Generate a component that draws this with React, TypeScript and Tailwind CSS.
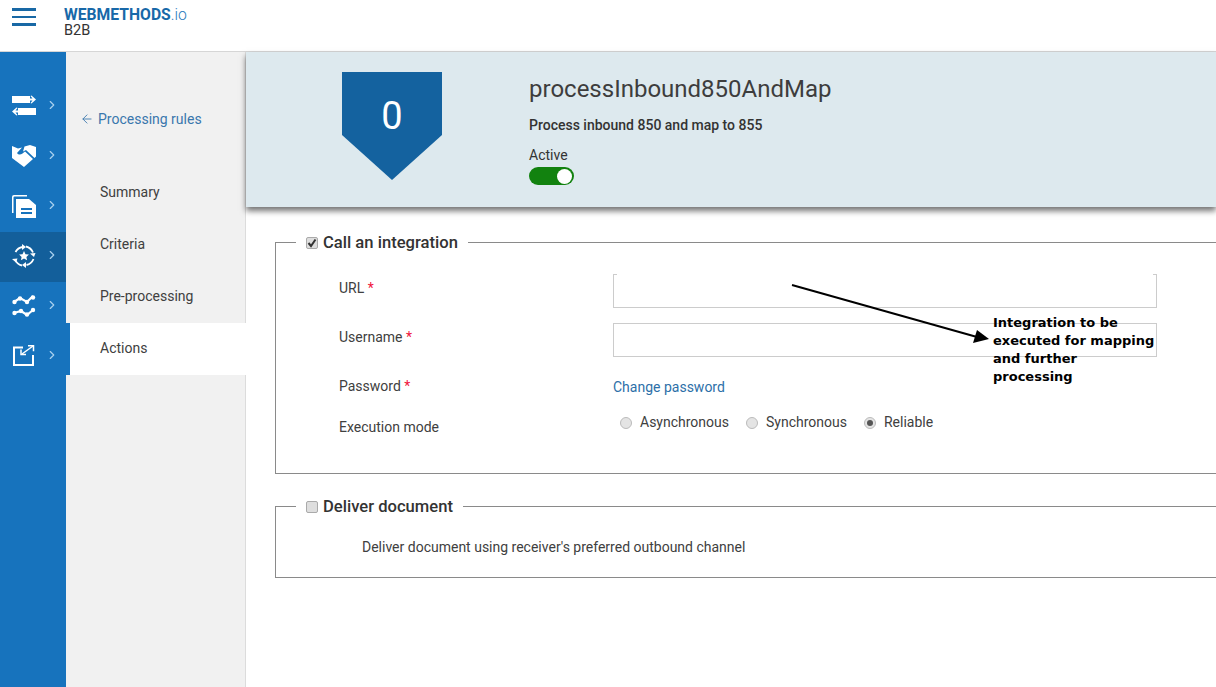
import React from 'react';
import { ChevronRight, ArrowLeft } from 'lucide-react';

const SwapIcon = () => (
  <svg width="24" height="22" viewBox="0 0 24 22" fill="white">
    <rect x="0" y="1" width="18" height="7" />
    <path d="M18 3.500h2.500L18.500 1l1-.5L24 4.500l-4.500 4-1-.5 2-2.500H18z" />
    <rect x="6" y="13" width="18" height="7" />
    <path d="M6 15.500H3.500L5.500 13l-1-.5L0 16.500l4.500 4 1-.5-2-2.500H6z" />
  </svg>
);

const HandshakeIcon = () => (
  <svg width="24" height="22" viewBox="0 0 24 22" fill="white">
    <path d="M0 1l6 2.500 4-1L5 8c1.500 2 3.500 2 5.500.5L13 6.500l8 7.500-9 8-12-9z" />
    <path d="M12.500 1.500L18 0l6 2v9.500l-1.500 1.500-8.500-8-3 1.500z" />
  </svg>
);

const DocIcon = () => (
  <svg width="24" height="24" viewBox="0 0 24 24" fill="white">
    <path d="M0 19V3a2 2 0 0 1 2-2h13v1.500H2.500a1 1 0 0 0-1 1V19z" />
    <path d="M4 24V5h13l7 6v13z" />
    <rect x="9" y="14" width="11" height="2" fill="#1773bd" />
    <rect x="9" y="18" width="11" height="2" fill="#1773bd" />
  </svg>
);

const RuleIcon = () => (
  <svg width="24" height="24" viewBox="0 0 24 24" fill="none" stroke="white" strokeWidth="1.800">
    <path d="M3.500 8a10 10 0 0 1 7-5" />
    <path d="M14 2.500a10 10 0 0 1 7 6" />
    <path d="M21.500 15a10 10 0 0 1-7 6" />
    <path d="M10 21.500a10 10 0 0 1-7-6" />
    <path d="M10 0l4 3-4 3z" fill="white" stroke="none" />
    <path d="M18 9.500l5.500-.5-1.500 4z" fill="white" stroke="none" />
    <path d="M14 24l-4-3 4-3z" fill="white" stroke="none" />
    <path d="M0 15l5.500-.5-1.500 4z" fill="white" stroke="none" />
    <path d="M12 7l1.500 3.200 3.400.4-2.500 2.300.7 3.400-3.100-1.800-3.100 1.800.7-3.400-2.500-2.300 3.400-.4z" fill="white" stroke="none" />
  </svg>
);

const TrendIcon = () => (
  <svg width="24" height="22" viewBox="0 0 24 22" fill="none" stroke="white" strokeWidth="2.200">
    <path d="M2 7l6-4 7 4 6-6" />
    <path d="M2 18l7-2 6 4 6-5" />
    <g fill="white" stroke="none">
      <circle cx="2.500" cy="7" r="2.200" />
      <circle cx="8" cy="3.500" r="2.200" />
      <circle cx="15" cy="7" r="2.200" />
      <circle cx="21" cy="2.500" r="2.200" />
      <circle cx="2.500" cy="18" r="2.200" />
      <circle cx="9" cy="16" r="2.200" />
      <circle cx="15" cy="19.500" r="2.200" />
      <circle cx="21" cy="15" r="2.200" />
    </g>
  </svg>
);

const ExportIcon = () => (
  <svg width="22" height="22" viewBox="0 0 22 22" fill="none" stroke="white" strokeWidth="2">
    <path d="M10 2.500H1V20h19v-10" />
    <path d="M9 9l11-8" strokeWidth="1.500" />
    <path d="M15 .8h5.500v5.500" strokeWidth="1.500" />
    <path d="M8 4.500v5h5" strokeWidth="1.500" />
  </svg>
);

const railItems = [
  { icon: <SwapIcon /> },
  { icon: <HandshakeIcon /> },
  { icon: <DocIcon /> },
  { icon: <RuleIcon />, active: true },
  { icon: <TrendIcon /> },
  { icon: <ExportIcon /> },
];

const subItems = [
  { label: 'Summary' },
  { label: 'Criteria' },
  { label: 'Pre-processing' },
  { label: 'Actions', active: true },
];

const Radio = ({ label, checked }: { label: string; checked?: boolean }) => (
  <div className="flex items-center gap-[8px]">
    <span className="w-[12px] h-[12px] rounded-full border border-[#bbb] bg-[#e4e4e4] flex items-center justify-center">
      {checked && <span className="w-[6px] h-[6px] rounded-full bg-[#555]" />}
    </span>
    <span>{label}</span>
  </div>
);

const Required = () => <span className="text-[#f0143c]"> *</span>;

const Checkbox = ({ checked }: { checked?: boolean }) => (
  <span className="w-[12px] h-[12px] rounded-[2px] border border-[#aaa] bg-[#dedede] flex items-center justify-center">
    {checked && (
      <svg width="10" height="10" viewBox="0 0 10 10" fill="none" stroke="#333" strokeWidth="2">
        <path d="M1.500 5l2.500 3 4.500-6.500" />
      </svg>
    )}
  </span>
);

const App = () => {
  return (
    <div className="relative w-[1216px] h-[687px] overflow-hidden bg-white text-[#404040] font-['Roboto',sans-serif] text-[14px]">
      {/* Top bar */}
      <header className="h-[52px] border-b border-[#d6d6d6] flex items-start">
        <div className="w-[24px] ml-[12px] mt-[8px] flex flex-col gap-[5px]">
          <span className="h-[2.500px] bg-[#1868a5]" />
          <span className="h-[2.500px] bg-[#1868a5]" />
          <span className="h-[2.500px] bg-[#1868a5]" />
        </div>
        <div className="ml-[28px] mt-[6px]">
          <div className="text-[15.700px] leading-[17px] font-bold text-[#1868a8]">
            WEBMETHODS<span className="font-light text-[#2a7bbd]">.io</span>
          </div>
          <div className="text-[14.500px] leading-[14px] mt-px text-[#333]">B2B</div>
        </div>
      </header>

      <div className="flex h-[635px]">
        {/* Icon rail */}
        <nav className="w-[66px] bg-[#1773bd] pt-[30px] shrink-0">
          {railItems.map((item, i) => (
            <div key={i} className={`h-[50px] pl-[12px] pb-[2px] flex items-center ${item.active ? 'bg-[#135f9b]' : ''}`}>
              <div className="w-[24px] flex justify-center">{item.icon}</div>
              <ChevronRight size={14} className="ml-[9px] -mt-[2px] text-[#a9d0ee]" />
            </div>
          ))}
        </nav>

        {/* Sub navigation */}
        <aside className="w-[180px] bg-[#f1f1f1] border-r border-[#dcdcdc] pt-[57px] shrink-0">
          <div className="pl-[14px] flex items-center gap-[4px] text-[#3a77ad] text-[14px] leading-[20px]">
            <ArrowLeft size={14} strokeWidth={1.5} />
            <span>Processing rules</span>
          </div>
          <div className="mt-[38px]">
            {subItems.map((item) => (
              <div
                key={item.label}
                className={`h-[52px] pb-[2px] flex items-center text-[14px] ${item.active ? 'bg-white w-[180px] border-l-[4px] border-[#1773bd] pl-[30px]' : 'pl-[34px]'}`}
              >
                {item.label}
              </div>
            ))}
          </div>
        </aside>

        <main className="flex-1 min-w-0">
          {/* Rule header */}
          <section className="h-[155px] bg-[#dde9ee] shadow-[0_4px_6px_rgba(0,0,0,0.55)] flex pl-[96px] pt-[20px]">
            <div className="relative w-[100px] h-[108px] shrink-0 flex justify-center">
              <svg width="100" height="108" viewBox="0 0 100 108" className="absolute inset-0">
                <path d="M0 0h100v63l-50 45L0 63z" fill="#14629f" />
              </svg>
              <span className="relative text-white text-[38px] leading-[44px] mt-[22px]">0</span>
            </div>
            <div className="ml-[87px]">
              <h1 className="text-[24px] leading-[34px] text-[#3d3d3d]">processInbound850AndMap</h1>
              <p className="mt-[10px] text-[14px] leading-[18px] font-medium text-[#333]">Process inbound 850 and map to 855</p>
              <div className="mt-[13px] text-[14px] leading-[16px] text-[#333]">Active</div>
              <div className="mt-[4px] w-[45px] h-[18px] rounded-full bg-[#12820f] flex items-center justify-end pr-[2px]">
                <span className="w-[15px] h-[15px] rounded-full bg-white" />
              </div>
            </div>
          </section>

          <div className="pl-[29px] pt-[24px] w-[1000px]">
            <fieldset className="border border-[#8a8a8a] h-[243px] pl-[24px] pb-0">
              <legend className="px-[10px] ml-[-4px] pt-[2px] flex items-center gap-[5px] text-[16.600px] leading-[20px] font-medium text-[#333]">
                <Checkbox checked />
                Call an integration
              </legend>
              <div className="pl-[39px] pt-[21px]">
                <div className="flex h-[34px] items-center">
                  <div className="w-[274px] -mt-[6px]">URL<Required /></div>
                  <div className="relative w-[544px] h-[34px] border border-[#cccccc] border-t-transparent">
                    <span className="absolute -left-px -top-px w-[4px] h-px bg-[#cccccc]" />
                    <span className="absolute -right-px -top-px w-[4px] h-px bg-[#cccccc]" />
                  </div>
                </div>
                <div className="flex h-[34px] items-center mt-[15px]">
                  <div className="w-[274px] -mt-[6px]">Username<Required /></div>
                  <div className="w-[544px] h-[34px] border border-[#cccccc]" />
                </div>
                <div className="flex items-center mt-[20px] h-[20px]">
                  <div className="w-[274px] -mt-[2px]">Password<Required /></div>
                  <div className="text-[#2d6fa8]">Change password</div>
                </div>
                <div className="flex items-center mt-[18px] h-[20px]">
                  <div className="w-[281px] mt-[5px]">Execution mode</div>
                  <div className="flex gap-[17px] -mt-[5px]">
                    <Radio label="Asynchronous" />
                    <Radio label="Synchronous" />
                    <Radio label="Reliable" checked />
                  </div>
                </div>
              </div>
            </fieldset>

            <fieldset className="mt-[21px] border border-[#8a8a8a] h-[83px] pl-[24px]">
              <legend className="px-[10px] ml-[-4px] pt-[2px] flex items-center gap-[5px] text-[16.600px] leading-[20px] font-medium text-[#333]">
                <Checkbox />
                Deliver document
              </legend>
              <div className="pl-[62px] pt-[20px] leading-[20px]">Deliver document using receiver's preferred outbound channel</div>
            </fieldset>
          </div>
        </main>
      </div>

      {/* Annotation pasted over the form */}
      <svg width="220" height="70" viewBox="0 0 220 70" className="absolute left-[785px] top-[280px]">
        <path d="M7 5L192 57" stroke="#000" strokeWidth="2" />
        <path d="M204 59L192 50l-4 13z" fill="#000" />
      </svg>
      <div className="absolute left-[993px] top-[314px] w-[164px] font-['DejaVu_Sans',sans-serif] text-[13px] leading-[18px] font-semibold text-black">
        Integration to be executed for mapping and further processing
      </div>
    </div>
  );
};

export default App;
